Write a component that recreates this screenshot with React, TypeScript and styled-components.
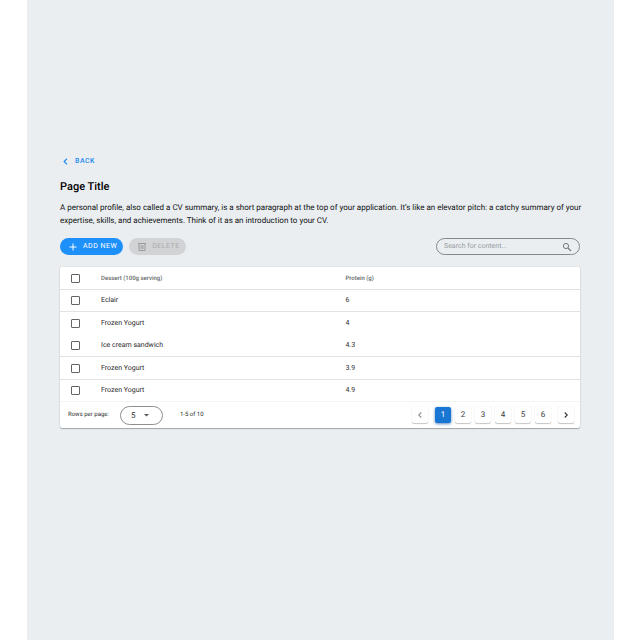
import React, { useState } from "react";
import styled, { createGlobalStyle } from "styled-components";

const GlobalStyle = createGlobalStyle`
  *, *::before, *::after { box-sizing: border-box; }
  body {
    margin: 0;
    background: #ffffff;
    color: #1c1d1f;
    font-family: Roboto, "Liberation Sans", sans-serif;
    text-rendering: geometricPrecision;
  }
  button, input, select { font-family: inherit; text-rendering: inherit; }
`;

const Page = styled.main`
  min-height: 100vh;
  margin: 0 26px 0 27px;
  padding: 155px 34px 32px 33px;
  background: #eaeef1;
`;

const BackLink = styled.a`
  display: flex;
  align-items: center;
  gap: 4px;
  width: fit-content;
  height: 13px;
  color: #1e8af0;
  font-size: 7px;
  font-weight: 500;
  letter-spacing: 0.5px;
  line-height: 13px;
  text-decoration: none;
`;

const Title = styled.h1`
  margin: 12px 0 0;
  color: #000000;
  font-size: 11px;
  font-weight: 500;
  line-height: 14px;
`;

const Description = styled.p`
  margin: 7px -4px 0 0;
  color: #111213;
  font-size: 8px;
  line-height: 13px;
`;

const Toolbar = styled.div`
  display: flex;
  align-items: center;
  gap: 6px;
  margin-top: 11px;
`;

const PillButton = styled.button<{ $primary?: boolean }>`
  display: flex;
  align-items: center;
  gap: 5px;
  height: 17px;
  padding: 0 6px 0 8px;
  border: 0;
  border-radius: 9px;
  background: ${(p) => (p.$primary ? "#1e90fa" : "#d2d3d4")};
  color: ${(p) => (p.$primary ? "#ffffff" : "#a9abad")};
  font-size: 7px;
  font-weight: 400;
  letter-spacing: 0.5px;
  line-height: 17px;
`;

const SearchField = styled.label`
  display: flex;
  align-items: center;
  width: 144px;
  height: 17px;
  margin-left: auto;
  padding: 0 7px;
  border: 1px solid #85898c;
  border-radius: 9px;
  color: #777a7d;
`;

const SearchInput = styled.input`
  flex: 1;
  min-width: 0;
  padding: 0;
  border: 0;
  outline: 0;
  background: transparent;
  color: #333333;
  font-size: 7px;
  line-height: 15px;
  &::placeholder { color: #989b9e; opacity: 1; }
`;

const Card = styled.section`
  margin-top: 12px;
  border-radius: 2px;
  background: #ffffff;
  box-shadow: 0 1px 1px rgba(0, 0, 0, 0.28), 0 0 2px rgba(0, 0, 0, 0.12);
`;

const Table = styled.table`
  width: 100%;
  border-collapse: separate;
  border-spacing: 0;
  table-layout: fixed;
`;

const SelectColumn = styled.col`
  width: 41px;
`;

const NameColumn = styled.col`
  width: 47%;
`;

const HeadCell = styled.th`
  height: 23px;
  padding: 0;
  border-bottom: 1px solid #e0e2e3;
  color: #66696b;
  font-size: 6px;
  font-weight: 500;
  line-height: 9px;
  text-align: left;
`;

const BodyRow = styled.tr`
  height: 22px;
  &:nth-child(even) { height: 23px; }
`;

const Cell = styled.td<{ $rule: string }>`
  padding: 0;
  border-bottom: 1px solid ${(p) => p.$rule};
  color: #2b2c2e;
  font-size: 7px;
  line-height: 9px;
`;

const Checkbox = styled.input`
  display: grid;
  place-content: center;
  appearance: none;
  width: 9px;
  height: 9px;
  margin: 0 0 0 11px;
  border: 1px solid #626466;
  border-radius: 1px;
  background: #ffffff;
  &:checked { background: #1976d2; border-color: #1976d2; }
  &:checked::after { content: "✓"; color: #ffffff; font-size: 7px; line-height: 7px; }
`;

const Footer = styled.footer`
  display: flex;
  align-items: center;
  height: 26px;
  padding: 0 6px 0 8px;
  color: #2b2c2e;
  font-size: 6px;
  line-height: 8px;
`;

const SizeField = styled.label`
  display: flex;
  align-items: center;
  gap: 11px;
`;

const SizeBox = styled.span`
  display: grid;
  grid-template-columns: 1fr;
  align-items: center;
  width: 43px;
  height: 19px;
  border: 1px solid #8c8f91;
  border-radius: 10px;
  > * { grid-area: 1 / 1; }
  > svg { justify-self: end; margin-right: 13px; pointer-events: none; }
`;

const SizeSelect = styled.select`
  appearance: none;
  width: 100%;
  height: 17px;
  padding: 0 0 0 10px;
  border: 0;
  outline: 0;
  background: transparent;
  color: #2b2c2e;
  font-size: 8px;
`;

const Range = styled.span`
  margin-left: 17px;
`;

const Pagination = styled.nav`
  display: flex;
  align-items: center;
  gap: 7px;
  margin-left: auto;
`;

const PageList = styled.div`
  display: flex;
  gap: 4px;
`;

const PageButton = styled.button<{ $active?: boolean }>`
  display: grid;
  place-items: center;
  width: 16px;
  height: 16px;
  padding: 0;
  border: 0;
  border-radius: 2px;
  background: ${(p) => (p.$active ? "#1976d2" : "#ffffff")};
  color: ${(p) => (p.$active ? "#ffffff" : "#3a3b3d")};
  box-shadow: ${(p) =>
    p.$active
      ? "0 1px 3px rgba(25, 90, 160, 0.7)"
      : "0 1px 1px rgba(0, 0, 0, 0.22), 0 0 1px rgba(0, 0, 0, 0.14)"};
  font-size: 8px;
  line-height: 16px;
  &:disabled { color: #8f9294; }
`;

const Chevron = ({ left, size = 8 }: { left?: boolean; size?: number }) => (
  <svg width={size} height={size} viewBox="0 0 8 8" fill="none" stroke="currentColor" strokeWidth={8.8 / size} aria-hidden="true">
    <path d={left ? "M5 2 3 4l2 2" : "M3 2 5 4 3 6"} />
  </svg>
);

const PlusIcon = () => (
  <svg width="10" height="10" viewBox="0 0 10 10" fill="none" stroke="currentColor" aria-hidden="true">
    <path d="M5 1.5v7M1.5 5h7" />
  </svg>
);

const TrashIcon = () => (
  <svg width="10" height="10" viewBox="0 0 10 10" fill="none" stroke="#939597" strokeWidth="0.9" aria-hidden="true">
    <path d="M1 1.5h8M2 1.5v7h6v-7M4.1 3.2v3.8M5.9 3.2v3.8" />
  </svg>
);

const SearchIcon = () => (
  <svg width="10" height="10" viewBox="0 0 10 10" fill="none" stroke="currentColor" aria-hidden="true">
    <circle cx="4" cy="4" r="2.6" />
    <path d="m6 6 3 3" strokeWidth="1.2" />
  </svg>
);

const rows = [
  { name: "Eclair", protein: "6", rule: "#e0e2e3" },
  { name: "Frozen Yogurt", protein: "4", rule: "transparent" },
  { name: "Ice cream sandwich", protein: "4.3", rule: "#e0e2e3" },
  { name: "Frozen Yogurt", protein: "3.9", rule: "#e0e2e3" },
  { name: "Frozen Yogurt", protein: "4.9", rule: "#f3f4f4" },
];

export default function App() {
  const [page, setPage] = useState(1);
  return (
    <>
      <GlobalStyle />
      <Page>
        <BackLink href="#">
          <Chevron left size={11} />
          BACK
        </BackLink>
        <Title>Page Title</Title>
        <Description>
          A personal profile, also called a CV summary, is a short paragraph at the top of your application. It’s like
          an elevator pitch: a catchy summary of your expertise, skills, and achievements. Think of it as an
          introduction to your CV.
        </Description>
        <Toolbar>
          <PillButton type="button" $primary>
            <PlusIcon />
            ADD NEW
          </PillButton>
          <PillButton type="button" disabled>
            <TrashIcon />
            DELETE
          </PillButton>
          <SearchField>
            <SearchInput type="text" placeholder="Search for content..." aria-label="Search for content" />
            <SearchIcon />
          </SearchField>
        </Toolbar>
        <Card>
          <Table>
            <colgroup>
              <SelectColumn />
              <NameColumn />
              <col />
            </colgroup>
            <thead>
              <tr>
                <HeadCell>
                  <Checkbox type="checkbox" aria-label="Select all rows" />
                </HeadCell>
                <HeadCell scope="col">Dessert (100g serving)</HeadCell>
                <HeadCell scope="col">Protein (g)</HeadCell>
              </tr>
            </thead>
            <tbody>
              {rows.map((row, i) => (
                <BodyRow key={i}>
                  <Cell $rule={row.rule}>
                    <Checkbox type="checkbox" aria-label={`Select ${row.name}`} />
                  </Cell>
                  <Cell $rule={row.rule}>{row.name}</Cell>
                  <Cell $rule={row.rule}>{row.protein}</Cell>
                </BodyRow>
              ))}
            </tbody>
          </Table>
          <Footer>
            <SizeField>
              Rows per page:
              <SizeBox>
                <SizeSelect defaultValue="5">
                  <option>5</option>
                  <option>10</option>
                </SizeSelect>
                <svg width="5" height="3" viewBox="0 0 5 3" aria-hidden="true">
                  <path d="M0 0h5L2.5 2.6z" fill="#55585a" />
                </svg>
              </SizeBox>
            </SizeField>
            <Range>1-5 of 10</Range>
            <Pagination aria-label="Pages">
              <PageButton type="button" aria-label="Previous page" disabled={page === 1} onClick={() => setPage(page - 1)}>
                <Chevron left size={10} />
              </PageButton>
              <PageList>
                {[1, 2, 3, 4, 5, 6].map((n) => (
                  <PageButton key={n} type="button" $active={n === page} onClick={() => setPage(n)}>
                    {n}
                  </PageButton>
                ))}
              </PageList>
              <PageButton type="button" aria-label="Next page" disabled={page === 6} onClick={() => setPage(page + 1)}>
                <Chevron size={10} />
              </PageButton>
            </Pagination>
          </Footer>
        </Card>
      </Page>
    </>
  );
}
